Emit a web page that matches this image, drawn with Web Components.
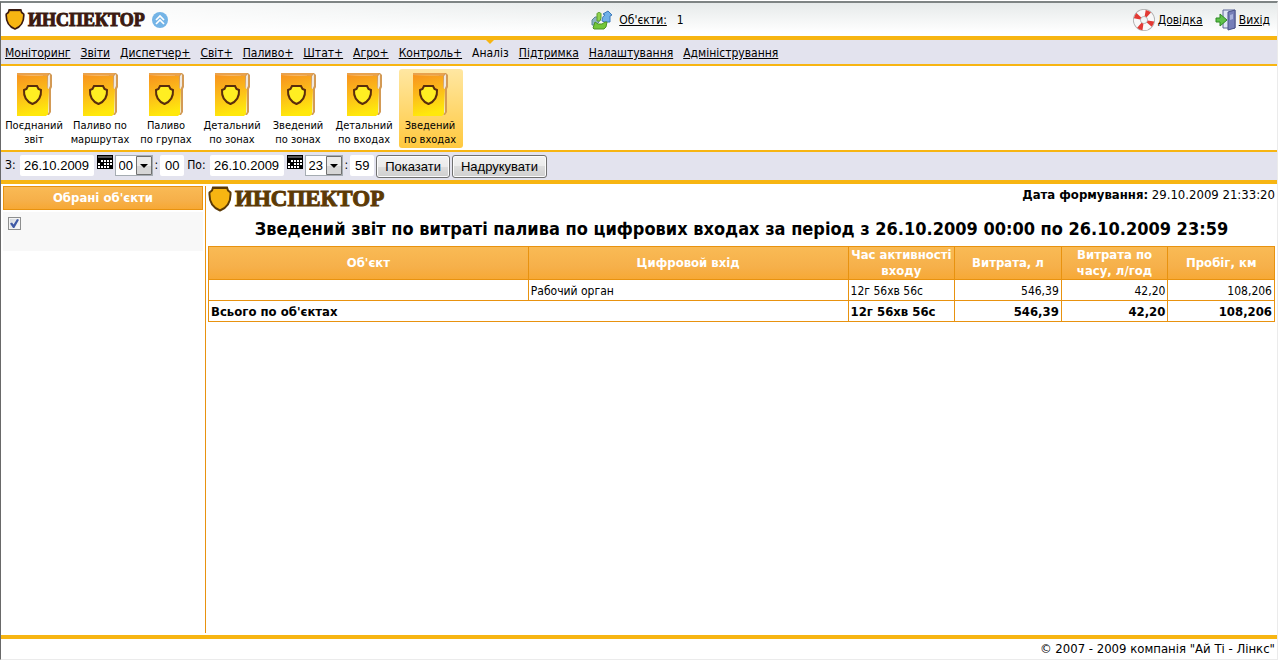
<!DOCTYPE html>
<html lang="uk">
<head>
<meta charset="utf-8">
<title>Инспектор</title>
<style>
    * { box-sizing: border-box; }
    html { height: 100%; }
    body {
        margin: 0;
        min-height: 100%;
        display: flex;
        padding: 1px 1px 1px 0;
        background: #fff;
        color: #000;
        font: 12px/16px Tahoma, "DejaVu Sans Condensed", "Noto Sans", sans-serif;
        --gold: #f7b512;
        --line: #e8920f;
        --bar: #e3e3ee;
        --head: linear-gradient(#f9ba55, #f6b04a 60%, #f7a834);
    }
    inspector-app { flex: 1; }
</style>
</head>
<body>
<inspector-app></inspector-app>

<script>
const BASE = `*{ box-sizing: border-box; } a{ color: inherit; }`;

function define(name, html)
{
    customElements.define(name, class extends HTMLElement
    {
        constructor()
        {
            super();
            this.attachShadow({ mode: "open" });
        }

        connectedCallback()
        {
            const markup = typeof html === "function" ? html(this) : html;
            this.shadowRoot.innerHTML = `<style>${BASE}</style>${markup}`;
        }
    });
}


// shield + word mark, size="small" (top bar) or "large" (report)
define("brand-logo", el => {
    const large = el.getAttribute("size") === "large";
    const ink = large ? "#5c3a05" : "#3b1a10";
    return `
        <style>
            :host{ display: flex; align-items: center; gap: 3px; }
            svg{ display: block; flex: none; }
            span{
                font: bold ${large ? 23 : 18}px/24px "Liberation Serif", "Times New Roman", serif;
                color: ${ink};
                -webkit-text-stroke: 1px ${ink};
            }
        </style>
        <svg width="${large ? 24 : 20}" height="${large ? 26 : 23}" viewBox="0 0 24 26">
            <path d="M5 1.5H19L20 4.500L22.500 6.500C23 15 20 21.500 12 24.500C4 21.500 1 15 1.500 6.500L4 4.500Z" fill="#f7b512" stroke="${ink}" stroke-width="2"/>
            <path d="M5 2H19" stroke="${ink}" stroke-width="2"/>
        </svg>
        <span>ИНСПЕКТОР</span>
    `;
});


define("top-bar", `
    <style>
        :host{
            display: grid;
            grid-template-columns: 1fr auto 1fr;
            align-items: center;
            height: 33px;
            padding: 0 7px 0 4px;
            background:
                linear-gradient(to right, #fff, #fff0 50%),
                linear-gradient(#e6eaea, #fff 90%);
        }
        div{ display: flex; align-items: center; }
        svg{ display: block; flex: none; }
        .left{ gap: 7px; }
        .mid{ gap: 6px; }
        .mid span{ margin-left: 4px; }
        .right{ justify-content: flex-end; gap: 12px; }
        .right div{ gap: 2px; }
        button{ border: 0; padding: 0; background: none; }
    </style>
    <div class="left">
        <brand-logo size="small"></brand-logo>
        <button type="button" aria-label="Згорнути">
            <svg width="16" height="16" viewBox="0 0 16 16">
                <circle cx="8" cy="8" r="8" fill="#74b4e6"/>
                <path d="M4 8L8 4L12 8M4 12L8 8L12 12" fill="none" stroke="#fff" stroke-width="1.700"/>
            </svg>
        </button>
    </div>
    <div class="mid">
        <svg width="22" height="20" viewBox="0 0 22 20">
            <path d="M1 10L4 7H8V12L5 15H1Z" fill="#8db4c4" stroke="#5c8598"/>
            <path d="M11 11C11 8 12 6 14 5L12 4L17 1L21 5L19 6V12H14Z" fill="#6fb0e8" stroke="#3a78ba"/>
            <path d="M6 4C6 2 10 2 10 4V8L9 11H6Z" fill="#8fd24f" stroke="#5a9d2a"/>
            <path d="M2 18L4 12L7 14H11L14 12H16L15 17L13 19H3Z" fill="#74c739" stroke="#4c9426"/>
        </svg>
        <a href="#objects">Об'єкти:</a>
        <span>1</span>
    </div>
    <div class="right">
        <div>
            <svg width="24" height="24" viewBox="0 0 24 24">
                <circle cx="12" cy="12" r="7" fill="none" stroke="#aaa" stroke-width="8"/>
                <circle cx="12" cy="12" r="7" fill="none" stroke="#f8f8f8" stroke-width="6.500"/>
                <circle cx="12" cy="12" r="7" fill="none" stroke="#e23a34" stroke-width="6.500" stroke-dasharray="4 7" stroke-dashoffset="-1"/>
            </svg>
            <a href="#help">Довідка</a>
        </div>
        <div>
            <svg width="22" height="22" viewBox="0 0 22 22">
                <path d="M8 1H20V19H8Z" fill="#dfe6f5" stroke="#5a6498"/>
                <path d="M13 3L20 1V19L13 21Z" fill="#767fb8" stroke="#4a5288"/>
                <path d="M15 6L18 5V10L15 11Z" fill="#a9b2dc"/>
                <path d="M1 9H5V5L12 11L5 17V13H1Z" fill="#5fc24a" stroke="#2f8a25"/>
            </svg>
            <a href="#exit">Вихід</a>
        </div>
    </div>
`);


define("main-menu", `
    <style>
        :host{
            display: block;
            background: var(--bar);
            border-top: 4px solid var(--gold);
            border-bottom: 2px solid var(--gold);
        }
        nav{ display: flex; gap: 10px; height: 24px; padding: 0 4px; }
    </style>
    <nav><slot></slot></nav>
`);

define("menu-item", el => el.hasAttribute("current") ? `
    <style>
        :host{ display: block; position: relative; line-height: 26px; }
        :host::before{
            content: "";
            position: absolute;
            top: 0;
            left: calc(50% - 4px);
            border: 4px solid transparent;
            border-top-color: var(--gold);
            border-bottom: 0;
        }
    </style>
    <span aria-current="page"><slot></slot></span>
` : `
    <style>
        :host{ display: block; line-height: 26px; }
    </style>
    <a href="#menu"><slot></slot></a>
`);


define("report-strip", `
    <style>
        :host{
            display: flex;
            gap: 2px;
            padding: 3px 2px 2px;
            border-bottom: 2px solid var(--gold);
        }
    </style>
    <slot></slot>
`);

let bookCount = 0;

define("report-tile", el => {
    const id = "book" + bookCount++;
    return `
        <style>
            :host{ display: block; width: 64px; }
            a{
                display: flex;
                flex-direction: column;
                align-items: center;
                height: 79px;
                padding: 3px 2px 1px 0;
                border-radius: 3px;
                color: #000;
                text-align: center;
                text-decoration: none;
                white-space: pre-line;
                font-size: 11px;
                line-height: 14px;
            }
            :host([selected]) a{ background: linear-gradient(#ffe7a2, #ffc93f); }
            svg{ display: block; flex: none; margin-bottom: 3px; }
        </style>
        <a href="#report"><svg width="38" height="44" viewBox="0 0 38 44">
            <defs><linearGradient id="${id}" x1="0" y1="0" x2=".2" y2="1">
                <stop offset="0" stop-color="#f7931e"/><stop offset=".5" stop-color="#fcbb1a"/><stop offset="1" stop-color="#ffe80c"/>
            </linearGradient></defs>
            <path d="M3 1H35L37 3V15L36 17V40L34 43H28V2Z" fill="#d39a55"/>
            <path d="M33 4L35 2V14L34 16V40L32 43Z" fill="#efe8de"/>
            <path d="M2 1H34L32 4L2 3Z" fill="#e8a24e"/>
            <path d="M2 3L32 4V16L34 17L33 42L31 44H2Z" fill="url(#${id})"/>
            <path d="M13 14H22L23.500 17L26 18C26.500 25 23.500 29.500 17.500 32C11.500 29.500 8.500 25 9 18L11.500 17Z" fill="#ffee22" stroke="#5a2d0c" stroke-width="2"/>
        </svg><slot></slot></a>
    `;
});


// date + hour + minute, label-text is printed before the date box
define("date-time-field", el => `
    <style>
        :host{ display: flex; align-items: flex-start; }
        label{ line-height: 21px; }
        input, select{
            height: 21px;
            margin: 0;
            padding: 0;
            border: 0;
            border-radius: 2px;
            background: #fff;
            color: #000;
            text-align: center;
            font: 13px/21px "Liberation Sans", Arial, sans-serif;
        }
        .date{ width: 74px; margin-left: 4px; }
        .minute{ width: 24px; margin-left: 2px; }
        button{ border: 0; padding: 0; margin: 0 2px 0 3px; background: none; }
        svg{ display: block; }
        .hour{ display: grid; grid-template-columns: 20px 18px; margin-right: 2px; }
        .hour select{
            grid-area: 1 / 1 / 2 / 3;
            width: 38px;
            padding: 0 0 0 3px;
            border: 1px solid #a5acb2;
            border-radius: 0;
            appearance: none;
            text-align: left;
            line-height: 19px;
        }
        .hour svg{ grid-area: 1 / 2; pointer-events: none; z-index: 1; }
    </style>
    <label for="date">${el.getAttribute("label-text")}</label>
    <input class="date" id="date" value="${el.getAttribute("date")}">
    <button type="button" aria-label="Календар">
        <svg width="16" height="14" viewBox="0 0 16 14" shape-rendering="crispEdges">
            <path d="M0 0H16V14H0Z" fill="#000"/>
            <path d="M1 1H15V3H1Z" fill="#555"/>
            <path d="M4 5h2v2H4zM7 5h2v2H7zM10 5h2v2h-2zM13 5h2v2h-2zM1 8h2v2H1zM7 8h2v2H7zM10 8h2v2h-2zM13 8h2v2h-2zM1 11h2v2H1zM4 11h2v2H4zM7 11h2v2H7zM10 11h2v2h-2z" fill="#fff"/>
        </svg>
    </button>
    <span class="hour">
        <select aria-label="Години"><option>${el.getAttribute("hour")}</option></select>
        <svg width="18" height="21" viewBox="0 0 18 21">
            <path d="M1.500 1.500H16.500V19.500H1.500Z" fill="#ebebeb" stroke="#707070"/>
            <path d="M2 11H16V19H2Z" fill="#d6d6d6"/>
            <path d="M5 9H13L9 13Z" fill="#000"/>
        </svg>
    </span>
    <label for="minute">:</label>
    <input class="minute" id="minute" value="${el.getAttribute("minute")}">
`);

define("push-button", `
    <style>
        :host{ display: block; }
        button{
            height: 23px;
            padding: 0 8px;
            border: 1px solid #707070;
            border-radius: 3px;
            box-shadow: inset 0 0 0 1px #fcfcfc;
            background: linear-gradient(#f2f2f2, #ebebeb 50%, #ddd 50%, #cfcfcf);
            color: #000;
            font: 13px/21px "Liberation Sans", Arial, sans-serif;
        }
    </style>
    <button type="button"><slot></slot></button>
`);

define("period-bar", `
    <style>
        :host{
            display: flex;
            gap: 2px;
            padding: 3px 4px 2px;
            height: 32px;
            background: var(--bar);
            border-bottom: 4px solid var(--gold);
        }
        date-time-field + date-time-field{ margin-left: 1px; }
    </style>
    <date-time-field label-text="З:" date="26.10.2009" hour="00" minute="00"></date-time-field>
    <date-time-field label-text="По:" date="26.10.2009" hour="23" minute="59"></date-time-field>
    <push-button>Показати</push-button>
    <push-button>Надрукувати</push-button>
`);


define("object-list", `
    <style>
        :host{ display: block; width: 205px; flex: none; padding-left: 2px; border-right: 1px solid var(--line); }
        h2{
            margin: 0 2px 2px 0;
            border: 1px solid var(--line);
            background: var(--head);
            color: #fff;
            font-size: 13px;
            line-height: 22px;
            text-align: center;
        }
        .item{ height: 39px; margin-right: 2px; padding: 5px; background: #f8f8f8; }
        input{
            display: grid;
            width: 13px;
            height: 13px;
            margin: 0;
            border: 1px solid #8e8f8f;
            appearance: none;
            background: linear-gradient(135deg, #cfd4da, #fff);
            box-shadow: inset 0 0 0 1px #f4f4f4;
        }
        input:checked::before{
            content: "";
            margin: 1px;
            background: #3f5aa6;
            clip-path: polygon(0 50%, 22% 38%, 40% 62%, 78% 0, 100% 8%, 48% 100%, 34% 100%);
        }
    </style>
    <h2>Обрані об'єкти</h2>
    <div class="item"><input type="checkbox" checked aria-label="Об'єкт"></div>
`);


define("fuel-report", `
    <style>
        :host{ display: block; flex: 1; min-width: 0; padding: 0 2px; }
        header{ display: flex; justify-content: space-between; align-items: flex-start; }
        header p{ margin: 1px 0 0; font-size: 13px; }
        h1{ margin: 6px 0; font-size: 18px; line-height: 22px; text-align: center; }
        table{ width: 100%; border-collapse: collapse; table-layout: fixed; }
        th, td{ padding: 2px 2px 0; border: 1px solid var(--line); line-height: 18px; text-align: left; }
        thead{ background: var(--head); color: #fff; font-size: 13px; }
        thead th{ height: 33px; padding: 0; line-height: 16px; text-align: center; }
        .wide{ width: 30%; }
        .num{ text-align: right; }
        tfoot{ font-size: 13px; font-weight: bold; }
    </style>
    <header>
        <brand-logo size="large"></brand-logo>
        <p><b>Дата формування:</b> 29.10.2009 21:33:20</p>
    </header>
    <h1>Зведений звіт по витраті палива по цифрових входах за період з 26.10.2009 00:00 по 26.10.2009 23:59</h1>
    <table>
        <thead>
            <tr>
                <th class="wide">Об'єкт</th>
                <th class="wide">Цифровой вхід</th>
                <th>Час активності входу</th>
                <th>Витрата, л</th>
                <th>Витрата по часу, л/год</th>
                <th>Пробіг, км</th>
            </tr>
        </thead>
        <tbody>
            <tr>
                <td></td>
                <td>Рабочий орган</td>
                <td>12г 56хв 56с</td>
                <td class="num">546,39</td>
                <td class="num">42,20</td>
                <td class="num">108,206</td>
            </tr>
        </tbody>
        <tfoot>
            <tr>
                <th colspan="2">Всього по об'єктах</th>
                <td>12г 56хв 56с</td>
                <td class="num">546,39</td>
                <td class="num">42,20</td>
                <td class="num">108,206</td>
            </tr>
        </tfoot>
    </table>
`);


define("inspector-app", `
    <style>
        :host{
            display: flex;
            flex-direction: column;
            border: 1px solid #ebebeb;
            border-top: 2px solid #7e8484;
            border-left-color: #696969;
        }
        main{ display: flex; flex: 1; padding: 2px 0; }
        footer{
            height: 24px;
            padding: 0 2px;
            border-top: 4px solid var(--gold);
            font-size: 13px;
            line-height: 20px;
            text-align: right;
        }
    </style>
    <top-bar></top-bar>
    <main-menu>
        <menu-item>Моніторинг</menu-item>
        <menu-item>Звіти</menu-item>
        <menu-item>Диспетчер+</menu-item>
        <menu-item>Світ+</menu-item>
        <menu-item>Паливо+</menu-item>
        <menu-item>Штат+</menu-item>
        <menu-item>Агро+</menu-item>
        <menu-item>Контроль+</menu-item>
        <menu-item current>Аналіз</menu-item>
        <menu-item>Підтримка</menu-item>
        <menu-item>Налаштування</menu-item>
        <menu-item>Адміністрування</menu-item>
    </main-menu>
    <report-strip>
        <report-tile>Поєднаний\nзвіт</report-tile>
        <report-tile>Паливо по\nмаршрутах</report-tile>
        <report-tile>Паливо\nпо групах</report-tile>
        <report-tile>Детальний\nпо зонах</report-tile>
        <report-tile>Зведений\nпо зонах</report-tile>
        <report-tile>Детальний\nпо входах</report-tile>
        <report-tile selected>Зведений\nпо входах</report-tile>
    </report-strip>
    <period-bar></period-bar>
    <main>
        <object-list></object-list>
        <fuel-report></fuel-report>
    </main>
    <footer>© 2007 - 2009 компанія "Ай Ті - Лінкс"</footer>
`);
</script>
</body>
</html>
